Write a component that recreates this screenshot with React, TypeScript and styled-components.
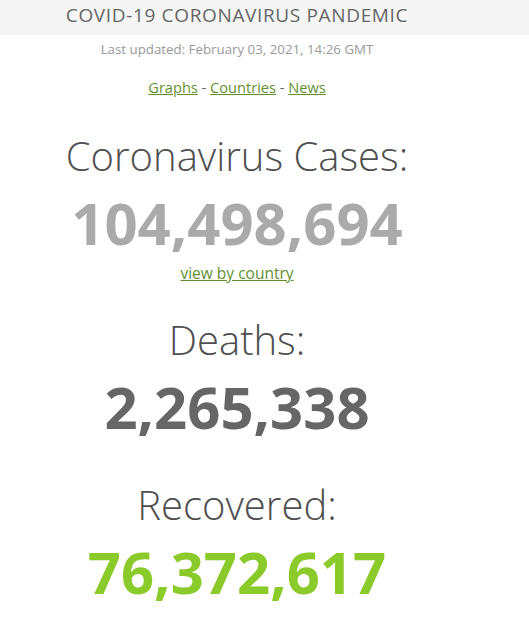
import styled, { createGlobalStyle } from "styled-components";

const GlobalStyle = createGlobalStyle`
  html, body {
    margin: 0;
    padding: 0;
    background: #fff;
    font-family: "Open Sans", "Liberation Sans", sans-serif;
  }
`;

const Page = styled.div`
  width: 529px;
  overflow: hidden;
`;

const TopBar = styled.header`
  background: #f5f5f5;
  height: 35px;
`;

const Column = styled.div`
  width: 474px;
  text-align: center;
`;

const Brand = styled.div`
  font-size: 19px;
  line-height: 31px;
  color: #666;
  letter-spacing: 0.65px;
`;

const Updated = styled.div`
  margin-top: 5px;
  font-size: 13.3px;
  color: #999;
`;

const NavLinks = styled.div`
  margin-top: 19px;
  font-size: 14.6px;
  color: #666;
`;

const Link = styled.a`
  color: #62902f;
  text-decoration: underline;
`;

const Section = styled.div<{ $gap: number }>`
  margin-top: ${(p) => p.$gap}px;
`;

const Heading = styled.h1`
  margin: 0;
  font-weight: 300;
  font-size: 40px;
  line-height: normal;
  color: #4f4f4f;
`;

const Counter = styled.div<{ $color: string }>`
  font-weight: 700;
  font-size: 58px;
  line-height: normal;
  color: ${(p) => p.$color};
`;

const SubLink = styled(Link)`
  display: inline-block;
  font-size: 15.5px;
  line-height: normal;
`;

export default function App() {
  return (
    <Page>
      <GlobalStyle />
      <TopBar>
        <Column>
          <Brand>COVID-19 CORONAVIRUS PANDEMIC</Brand>
        </Column>
      </TopBar>
      <Column>
        <Updated>Last updated: February 03, 2021, 14:26 GMT</Updated>
        <NavLinks>
          <Link href="#">Graphs</Link> - <Link href="#">Countries</Link> -{" "}
          <Link href="#">News</Link>
        </NavLinks>
        <Section $gap={31}>
          <Heading>Coronavirus Cases:</Heading>
          <Counter $color="#aaa">104,498,694</Counter>
          <SubLink href="#">view by country</SubLink>
        </Section>
        <Section $gap={28}>
          <Heading>Deaths:</Heading>
          <Counter $color="#666">2,265,338</Counter>
        </Section>
        <Section $gap={31}>
          <Heading>Recovered:</Heading>
          <Counter $color="#8aca2b">76,372,617</Counter>
        </Section>
      </Column>
    </Page>
  );
}
